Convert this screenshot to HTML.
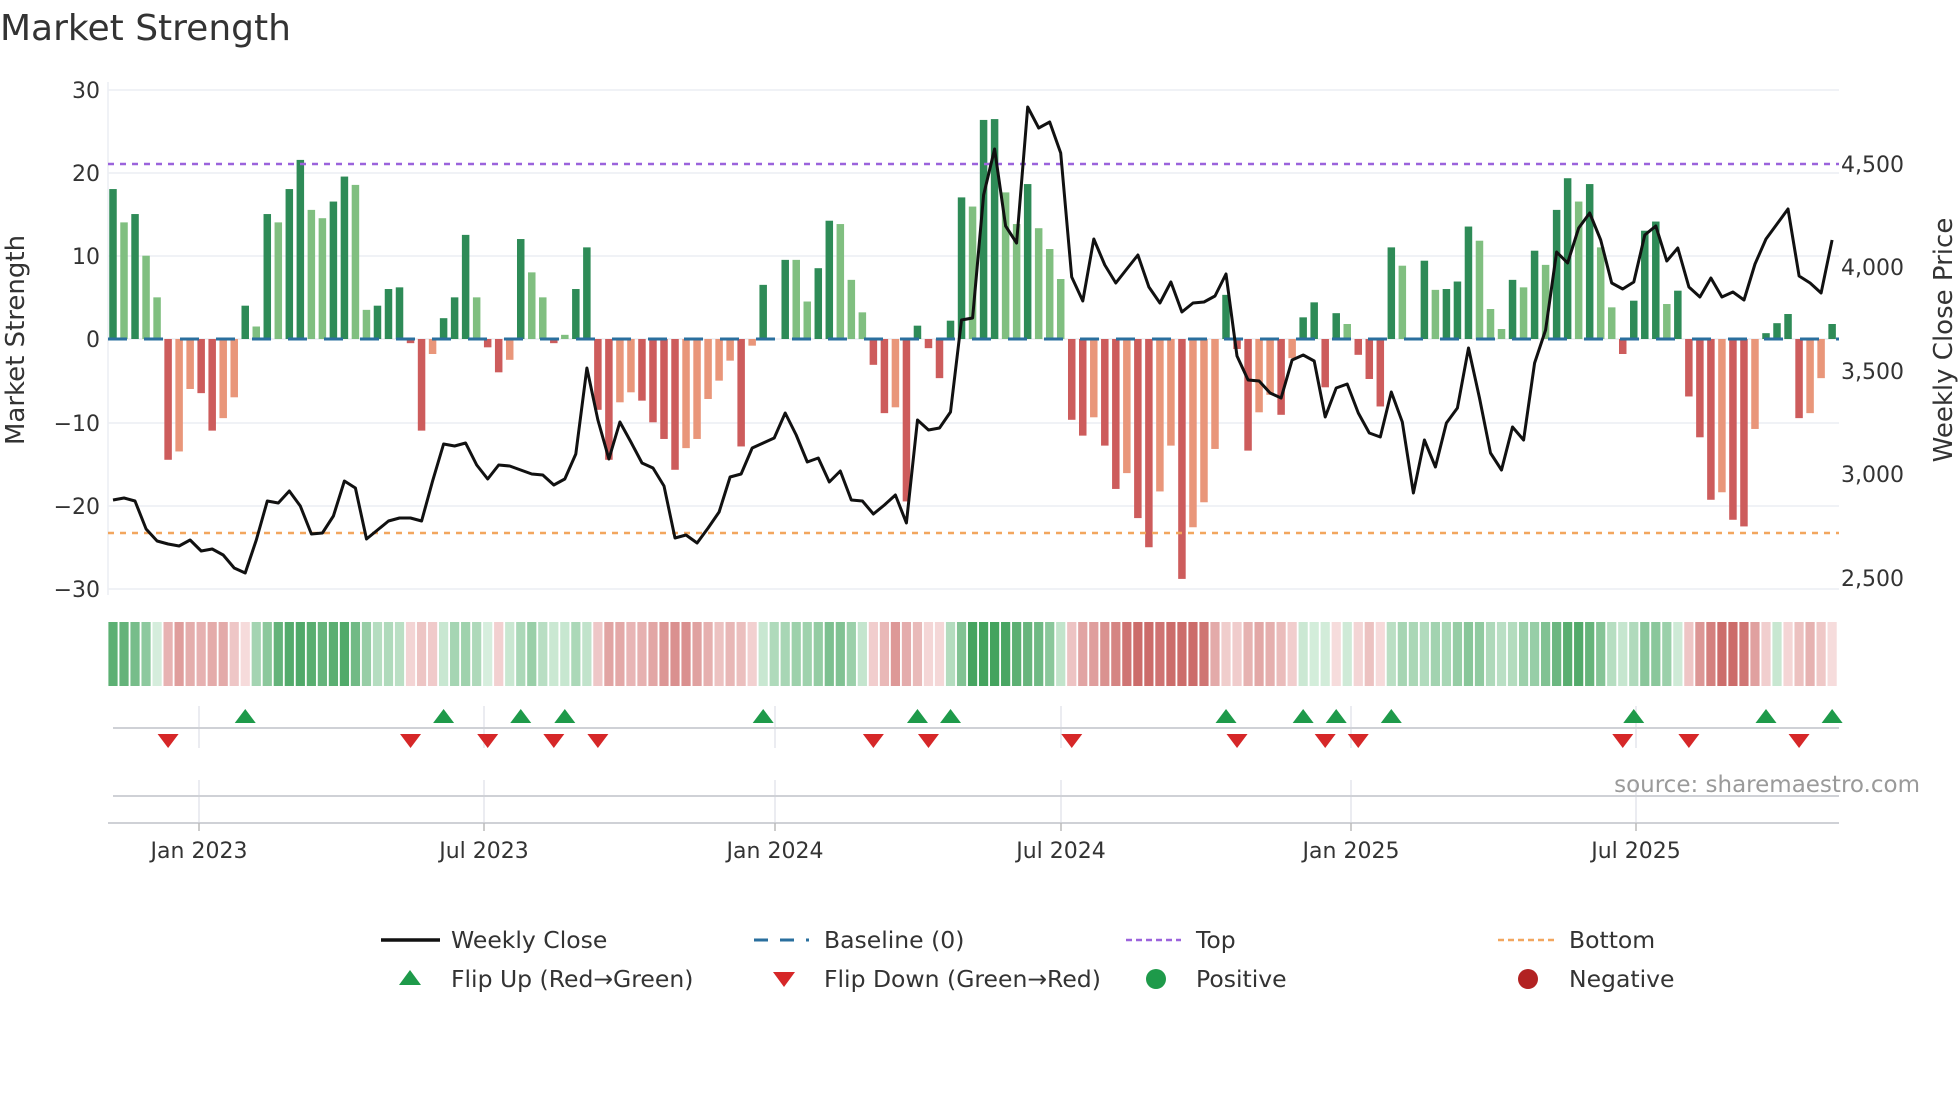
<!DOCTYPE html>
<html><head><meta charset="utf-8">
<style>
html,body{margin:0;padding:0;background:#fff;}
svg{display:block;font-family:"DejaVu Sans","Liberation Sans",sans-serif;}
</style></head>
<body>
<svg id="s" width="1960" height="1102" viewBox="0 0 1960 1102" xmlns="http://www.w3.org/2000/svg">
<rect width="1960" height="1102" fill="#fff"/>
<text x="0" y="40" font-size="36" fill="#333">Market Strength</text>
<g stroke="#eceef4" stroke-width="1.5">
<line x1="108" x2="1839" y1="90" y2="90"/><line x1="108" x2="1839" y1="173" y2="173"/>
<line x1="108" x2="1839" y1="256" y2="256"/><line x1="108" x2="1839" y1="339" y2="339"/>
<line x1="108" x2="1839" y1="423" y2="423"/><line x1="108" x2="1839" y1="506" y2="506"/>
<line x1="108" x2="1839" y1="589" y2="589"/>
<line x1="108" x2="108" y1="82" y2="595"/>
</g>
<g font-size="22" fill="#333" text-anchor="end">
<text x="100" y="98">30</text><text x="100" y="181">20</text><text x="100" y="264">10</text>
<text x="100" y="347">0</text><text x="100" y="431">−10</text><text x="100" y="514">−20</text><text x="100" y="597">−30</text>
</g>
<g font-size="22" fill="#333">
<text x="1841" y="172">4,500</text><text x="1841" y="275">4,000</text><text x="1841" y="379">3,500</text>
<text x="1841" y="482">3,000</text><text x="1841" y="586">2,500</text>
</g>
<text transform="translate(24,340) rotate(-90)" font-size="26" fill="#333" text-anchor="middle">Market Strength</text>
<text transform="translate(1952,340) rotate(-90)" font-size="26" fill="#333" text-anchor="middle">Weekly Close Price</text>
<g id="bars"></g>
<line x1="108" x2="1839" y1="339" y2="339" stroke="#2a6f9e" stroke-width="3" stroke-dasharray="19 17"/>
<line x1="108" x2="1839" y1="164" y2="164" stroke="#9b63dc" stroke-width="2.5" stroke-dasharray="6 6"/>
<line x1="108" x2="1839" y1="533" y2="533" stroke="#f2a65e" stroke-width="2.5" stroke-dasharray="6 6"/>
<polyline id="pl" fill="none" stroke="#111" stroke-width="3" stroke-linejoin="round"/>
<g id="heat"></g>
<g stroke="#e4e6ec" stroke-width="1.5">
<line x1="199" x2="199" y1="706" y2="748"/><line x1="484" x2="484" y1="706" y2="748"/>
<line x1="775" x2="775" y1="706" y2="748"/><line x1="1061" x2="1061" y1="706" y2="748"/>
<line x1="1351" x2="1351" y1="706" y2="748"/><line x1="1636" x2="1636" y1="706" y2="748"/>
<line x1="199" x2="199" y1="780" y2="823"/><line x1="484" x2="484" y1="780" y2="823"/>
<line x1="775" x2="775" y1="780" y2="823"/><line x1="1061" x2="1061" y1="780" y2="823"/>
<line x1="1351" x2="1351" y1="780" y2="823"/><line x1="1636" x2="1636" y1="780" y2="823"/>
</g>
<line x1="113" x2="1839" y1="728" y2="728" stroke="#cfd1d6" stroke-width="2"/>
<line x1="113" x2="1839" y1="796" y2="796" stroke="#cfd1d6" stroke-width="2"/>
<line x1="108" x2="1839" y1="823" y2="823" stroke="#cfd1d6" stroke-width="2"/>
<g stroke="#bbb" stroke-width="1.5">
<line x1="199" x2="199" y1="823" y2="831"/><line x1="484" x2="484" y1="823" y2="831"/>
<line x1="775" x2="775" y1="823" y2="831"/><line x1="1061" x2="1061" y1="823" y2="831"/>
<line x1="1351" x2="1351" y1="823" y2="831"/><line x1="1636" x2="1636" y1="823" y2="831"/>
</g>
<g id="flips"></g>
<text x="1920" y="792" font-size="23" fill="#9a9a9a" text-anchor="end">source: sharemaestro.com</text>
<g font-size="22" fill="#333" text-anchor="middle">
<text x="199" y="858">Jan 2023</text><text x="484" y="858">Jul 2023</text><text x="775" y="858">Jan 2024</text>
<text x="1061" y="858">Jul 2024</text><text x="1351" y="858">Jan 2025</text><text x="1636" y="858">Jul 2025</text>
</g>
<g font-size="23.5" fill="#333">
<line x1="381" x2="440" y1="940" y2="940" stroke="#111" stroke-width="3.5"/>
<text x="451" y="948">Weekly Close</text>
<line x1="754" x2="809" y1="940" y2="940" stroke="#2a6f9e" stroke-width="3" stroke-dasharray="14 12"/>
<text x="824" y="948">Baseline (0)</text>
<line x1="1126" x2="1181" y1="940" y2="940" stroke="#9b63dc" stroke-width="2.5" stroke-dasharray="6 4"/>
<text x="1196" y="948">Top</text>
<line x1="1498" x2="1554" y1="940" y2="940" stroke="#f2a65e" stroke-width="2.5" stroke-dasharray="6 4"/>
<text x="1569" y="948">Bottom</text>
<polygon points="399,985 421,985 410,970" fill="#1e9a4a"/>
<text x="451" y="987">Flip Up (Red→Green)</text>
<polygon points="773,972 795,972 784,987" fill="#d62728"/>
<text x="824" y="987">Flip Down (Green→Red)</text>
<circle cx="1156" cy="979" r="10" fill="#1e9a4a"/>
<text x="1196" y="987">Positive</text>
<circle cx="1528" cy="979" r="10" fill="#b22222"/>
<text x="1569" y="987">Negative</text>
</g>
</svg>
<script>
var v=[18,14,15,10,5,-14.5,-13.5,-6,-6.5,-11,-9.5,-7,4,1.5,15,14,18,21.5,15.5,14.5,16.5,19.5,18.5,3.5,4,6,6.2,-0.5,-11,-1.8,2.5,5,12.5,5,-1,-4,-2.5,12,8,5,-0.5,0.5,6,11,
-8.5,-14.5,-7.6,-6.4,-7.4,-10,-12,-15.7,-13.1,-12,-7.2,-5,-2.6,-12.9,-0.8,6.5,0,9.5,9.5,4.5,8.5,14.2,13.8,7.1,3.2,-3.1,-8.9,-8.2,-19.5,1.6,-1.1,-4.7,2.2,17,15.9,26.3,26.4,
17.6,13.8,18.6,13.3,10.8,7.2,-9.7,-11.6,-9.4,-12.8,-18,-16.1,-21.5,-25,-18.3,-12.8,-28.8,-22.6,-19.6,-13.2,5.3,-1.2,-13.4,-8.8,-6.7,-9.1,-2.3,2.6,4.4,-5.8,3.1,1.8,-1.9,-4.8,-8.1,11,8.8,0,9.4,5.9,
6,6.9,13.5,11.8,3.6,1.2,7.1,6.2,10.6,8.9,15.5,19.3,16.5,18.6,11,3.8,-1.8,4.6,13,14.1,4.2,5.8,-6.9,-11.8,-19.3,-18.4,-21.7,-22.5,-10.8,0.7,1.9,3,-9.5,-8.9,-4.7,1.8];
var dl="dldlldlldd"+"lldldlddll"+"ddlldddddl"+"dddlddldll"+"dlddddlldd"+"ddllllldld"+"ddllddllld"+"dlddddddld"+"dlldlllddl"+"ddlddlldll"+"ldddlldldd"+"ddlddddldd"+"ldddllldld"+"lddldllddd"+"dlddddlddl"+"ddddlld";
var py=[500,498,501,529,541,544,546,540,551,549,555,568,573,540,501,503,491,506,534,533,516,481,488,539,530,521,518,518,521,481,444,446,443,465,479,465,466,470,474,475,485,479,454,368,
420,459,422,442,463,468,486,538,535,543,528,512,477,474,448,443,438,413,435,462,458,482,471,500,501,514,505,495,523,420,430,428,412,320,318,195,149,
226,243,107,128,122,153,277,301,239,265,283,269,255,287,303,282,312,303,302,296,274,356,380,381,393,398,360,355,361,417,388,384,413,433,437,392,422,493,440,467,
423,408,348,398,453,470,427,440,363,330,252,263,228,213,240,283,289,282,235,226,261,248,287,297,278,297,292,300,264,239,224,209,276,283,293,240];
var NS="http://www.w3.org/2000/svg";
function el(t,a,p){var e=document.createElementNS(NS,t);for(var k in a)e.setAttribute(k,a[k]);p.appendChild(e);return e;}
var bars=document.getElementById('bars'),heat=document.getElementById('heat'),fl=document.getElementById('flips');
var P=11.02,X0=113,Z=339,U=8.33,pts=[];
function mix(a,b,t){return 'rgb('+[0,1,2].map(function(k){return Math.round(a[k]+(b[k]-a[k])*t)}).join(',')+')';}
for(var i=0;i<v.length;i++){
 var cx=X0+P*i,val=v[i],d=dl[i]=='d';
 if(val!==0){
  var h=Math.abs(val)*U,col=val>0?(d?'#2e8b57':'#80bf80'):(d?'#cd5c5c':'#e9967a');
  el('rect',{x:cx-3.75,y:val>0?Z-h:Z,width:7.5,height:h,fill:col},bars);
 }
 pts.push(cx.toFixed(1)+','+py[i]);
 var a=v[Math.max(0,i-1)],b=v[Math.min(v.length-1,i+1)],s=(a+val+b)/3,t=Math.min(Math.abs(s)/20,1);
 var c=s>=0?mix([214,238,221],[68,163,94],t):mix([247,222,222],[204,108,106],t);
 el('rect',{x:cx-4.6,y:622,width:9.2,height:64,fill:c},heat);
 if(i>0){var pv=v[i-1];
  if(pv<0&&val>0) el('polygon',{points:(cx-10.5)+',723 '+(cx+10.5)+',723 '+cx+',709',fill:'#1e9a4a'},fl);
  if(pv>0&&val<0) el('polygon',{points:(cx-10.5)+',734 '+(cx+10.5)+',734 '+cx+',748',fill:'#d62728'},fl);
 }
}
document.getElementById('pl').setAttribute('points',pts.join(' '));
</script>
</body></html>
